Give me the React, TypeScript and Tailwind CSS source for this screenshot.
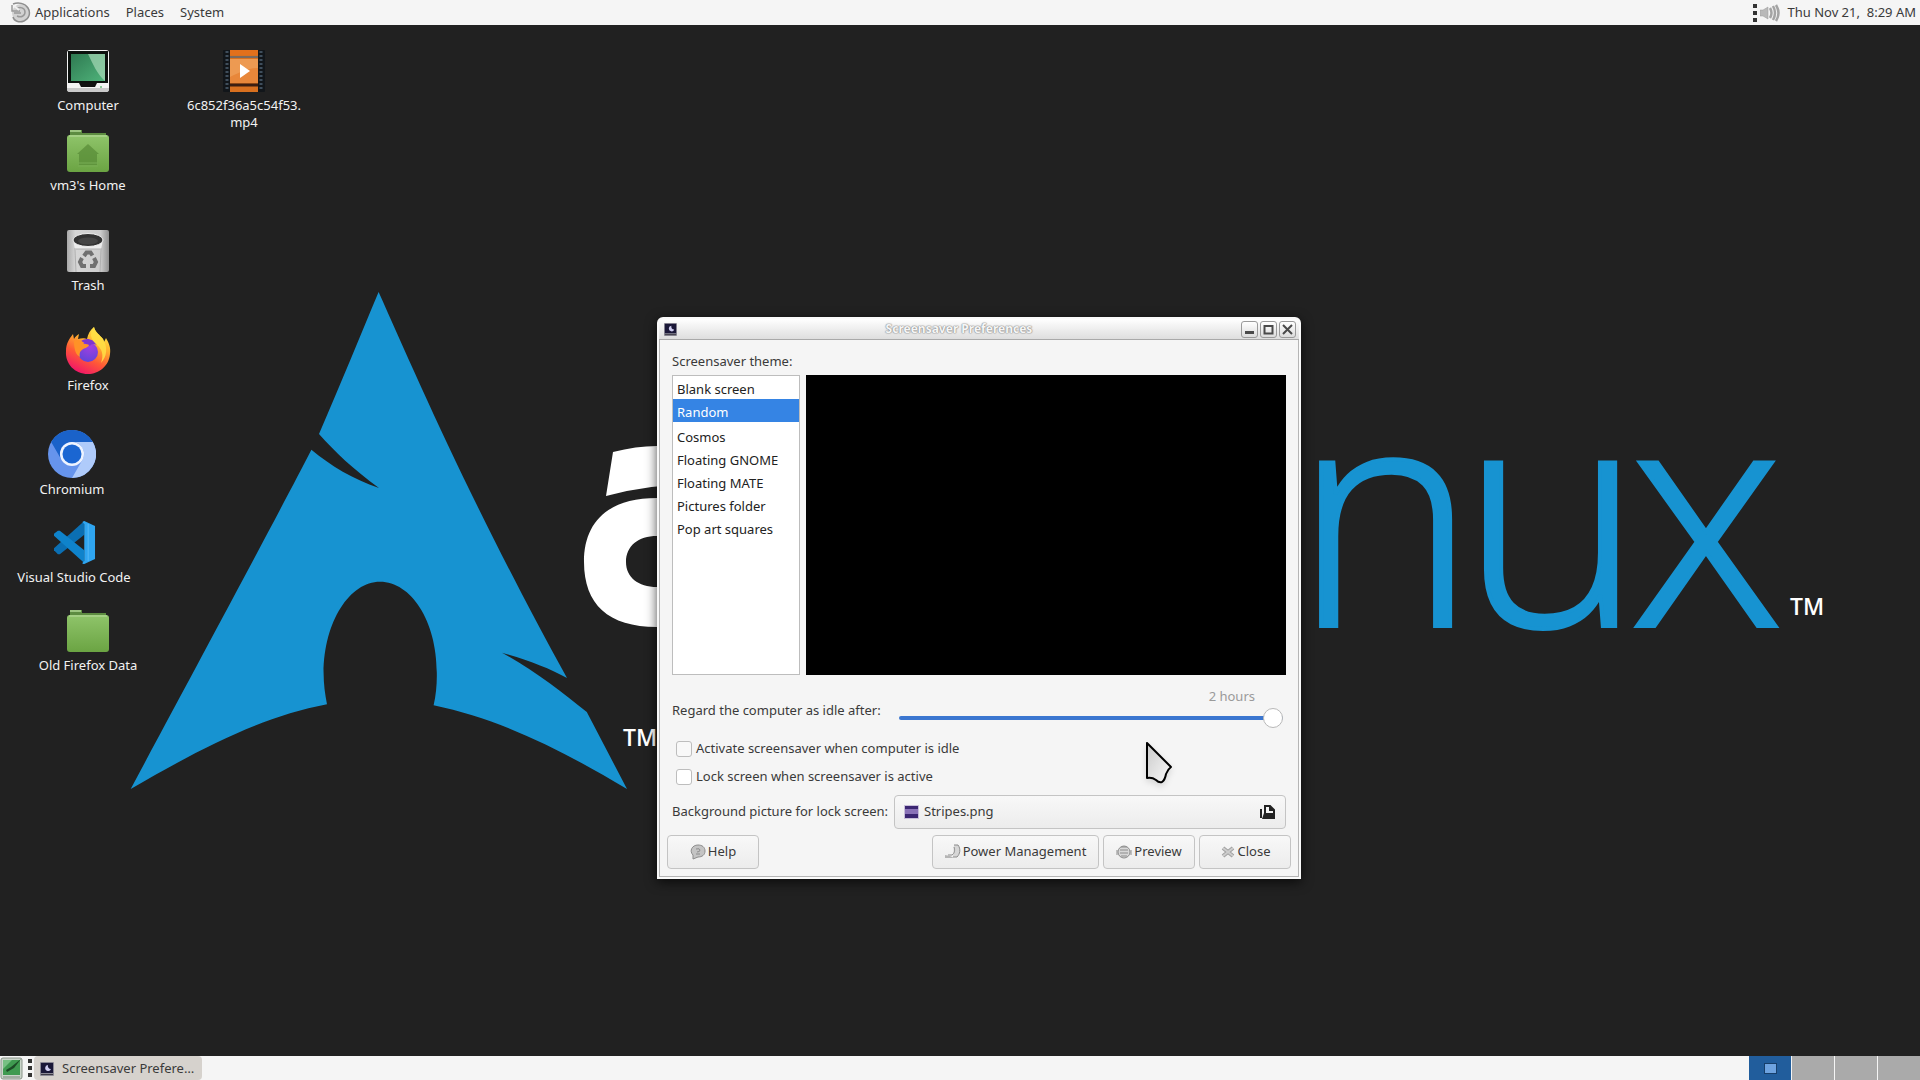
import React, { useState } from "react";

const THEMES = ["Cosmos", "Floating GNOME", "Floating MATE", "Pictures folder", "Pop art squares"];

function Wallpaper() {
  return (
    <svg
      className="absolute inset-0 h-full w-full"
      viewBox="0 0 1920 1080"
      preserveAspectRatio="xMidYMid slice"
      aria-hidden="true"
    >
      <path
        fill="#1793d1"
        d="M378.600 292 C361 334 341 383 319 434 C335 452 353 469 379 488 C353 479 331 466 311.400 449.700 C280 511 204 652 130.700 789 C200 749 260 717 327 704.300 C325 694 323.600 684 323.600 673 C324 621 350 581.700 380 581.700 C411 581.700 437 621 436.800 673 C437 684 436 695 433.600 705.300 C500 719 560 749 627 789 L586.800 712 C562 692 534 670 502 652.700 C528 660 549 668 567 678 C470 502 415 373 378.600 292 Z"
      />
      <g fill="#ffffff">
        <path d="M613 452 Q636 446 657 446 H700 V484 Q650 484 606 496 Z" />
        <path d="M657 498 C608 498 584 522 584 562 C584 604 608 627 657 627 H700 V587 H657 C638 587 626 577 626 562 C626 546 638 536 657 536 H700 V498 Z" />
      </g>
      <g className="font-['Open_Sans',sans-serif]">
        <g fontSize="308" fontWeight="300" fill="#1793d1" stroke="#1793d1" strokeWidth="4">
          <text x="1294" y="626">n</text>
          <text x="1461" y="626">u</text>
          <text x="1630" y="626">x</text>
        </g>
        <g fontSize="23" fontWeight="600" fill="#ffffff">
          <text x="623" y="746">TM</text>
          <text x="1790" y="615">TM</text>
        </g>
      </g>
    </svg>
  );
}

function ComputerIcon() {
  return (
    <svg className="h-[42px] w-[42px]" viewBox="0 0 42 42">
      <defs>
        <linearGradient id="screen" x1="0" y1="0" x2="1" y2="1">
          <stop offset="0" stopColor="#2f7a52" />
          <stop offset="1" stopColor="#4fb37a" />
        </linearGradient>
      </defs>
      <rect x="0" y="0" width="42" height="42" rx="3" fill="#f4f4f4" />
      <path d="M1 1h40v32H1z" fill="#0c110e" />
      <rect x="4" y="4" width="34" height="27" fill="url(#screen)" />
      <path d="M21 4h17v27C30 24 26 14 21 4z" fill="#a7d8b6" opacity=".7" />
      <path d="M12 33h18l-2 4H14z" fill="#111" />
      <path d="M0 38h42v1a3 3 0 0 1-3 3H3a3 3 0 0 1-3-3z" fill="#c9c9c9" />
      <circle cx="34" cy="37" r="1" fill="#6abf7b" />
    </svg>
  );
}

function FolderIcon({ home = false }: { home?: boolean }) {
  return (
    <svg className="h-[42px] w-[42px]" viewBox="0 0 42 42">
      <defs>
        <linearGradient id="folder" x1="0" y1="0" x2="0" y2="1">
          <stop offset="0" stopColor="#8fc46a" />
          <stop offset="1" stopColor="#6ba443" />
        </linearGradient>
      </defs>
      <path d="M3 0h12v3h24v10H3z" fill="#5d8c41" />
      <path d="M3 0h11v2H3z" fill="#9cc580" />
      <rect x="0" y="5" width="42" height="37" rx="3" fill="url(#folder)" />
      <path d="M2 6h38" stroke="#b9dc9f" strokeWidth="1" />
      {home && <path d="M21 14l11 10h-2v11H12V24h-2z" fill="#578a36" opacity=".7" />}
      {home && <path d="M11 36h20M11 33h20" stroke="#79ad54" strokeWidth="1" />}
    </svg>
  );
}

function TrashIcon() {
  return (
    <svg className="h-[42px] w-[42px]" viewBox="0 0 42 42">
      <defs>
        <linearGradient id="bin" x1="0" y1="0" x2="1" y2="0">
          <stop offset="0" stopColor="#a9a9a9" />
          <stop offset=".2" stopColor="#d6d6d6" />
          <stop offset=".8" stopColor="#cccccc" />
          <stop offset="1" stopColor="#8f8f8f" />
        </linearGradient>
      </defs>
      <rect width="42" height="42" rx="2" fill="url(#bin)" />
      <path d="M6 10l2 9h26l2-9z" fill="#ededed" />
      <ellipse cx="21" cy="10" rx="15" ry="6.500" fill="#333" stroke="#efefef" />
      <ellipse cx="21" cy="11" rx="10" ry="3.500" fill="#454545" />
      <path d="M7 19h28M8 20l1 22M34 20l-1 22" stroke="#b0b0b0" fill="none" />
      <g stroke="#707070" strokeWidth="4" fill="none">
        <path d="M17 26l2.500-3.500h4l2 3" />
        <path d="M27 28l2 4-2 4h-4" />
        <path d="M19 36h-4l-2-4 2-4" />
      </g>
    </svg>
  );
}

function FirefoxIcon() {
  return (
    <svg className="h-[48px] w-[46px]" viewBox="0 0 46 48">
      <defs>
        <linearGradient id="ffFlame" x1=".8" y1="0" x2=".3" y2="1">
          <stop offset="0" stopColor="#fff44f" />
          <stop offset=".35" stopColor="#ffb02e" />
          <stop offset=".65" stopColor="#ff5a36" />
          <stop offset="1" stopColor="#f0136b" />
        </linearGradient>
        <radialGradient id="ffGlobe" cx=".6" cy=".2" r=".9">
          <stop offset="0" stopColor="#a43fe0" />
          <stop offset="1" stopColor="#5b45d8" />
        </radialGradient>
      </defs>
      <path
        d="M29 1c1 5 6 8 9 12l1 3 2-4c3 5 5 10 4 16-1 12-11 20-22 20C10 48 0 38 1 25c0-7 3-12 7-17l1 5c1-2 3-4 5-5l-1 5c3-1 7-1 9 0 1-5 3-9 7-12z"
        fill="url(#ffFlame)"
      />
      <circle cx="23" cy="26" r="10" fill="url(#ffGlobe)" />
      <path d="M16 15c5-4 13-2 16 4-4-2-6-1-7 1z" fill="#7d35cf" />
      <path d="M9 15c4-2 8-1 10 3 2 0 4 0 5 1-1 3-5 3-7 5-2 1-3 4-2 7-4-2-6-7-6-16z" fill="#ff9227" />
      <path d="M29 1c1 5 6 8 9 12 5 8 4 18-2 24 3-8 1-14-4-18-3-3-5-5-6-9 0-4 1-7 3-9z" fill="#ffdf45" opacity=".85" />
    </svg>
  );
}

function ChromiumIcon() {
  return (
    <svg className="h-[48px] w-[48px]" viewBox="0 0 48 48">
      <circle cx="24" cy="24" r="24" fill="#6694ec" />
      <path d="M3.200 12A24 24 0 0 1 44.800 12H24A12 12 0 0 0 13.600 30z" fill="#1a62c9" />
      <path d="M44.800 12A24 24 0 0 1 24 48l10.400-18A12 12 0 0 0 24 12z" fill="#afcbfa" />
      <circle cx="24" cy="24" r="12" fill="#eef4ff" />
      <circle cx="24" cy="24" r="9.500" fill="#1a66d2" />
    </svg>
  );
}

function CodeIcon() {
  return (
    <svg className="h-[43px] w-[43px]" viewBox="0 0 44 44">
      <path d="M32 0l-31 28 0 2 4 4 2 0 25-20z" fill="#0b6fb3" />
      <path d="M1 13l0 2 31 28v-13L7 10l-2 0z" fill="#0f83cb" />
      <path d="M32 0l11 5v34l-11 5c-1 0-2 0-2-1l2-2V3l-2-2z" fill="#2fa5f0" />
      <path d="M36 3v38" stroke="#56b9f7" strokeWidth="1" />
    </svg>
  );
}

function VideoIcon() {
  return (
    <svg className="h-[42px] w-[42px]" viewBox="0 0 42 42">
      <rect width="42" height="42" rx="1" fill="#12161a" />
      <rect x="7" width="28" height="42" fill="#d8701f" />
      <rect x="7" y="0" width="28" height="5" fill="#e2701c" />
      <rect x="7" y="9" width="28" height="24" fill="#e8873a" />
      <path d="M7 9h28v9C26 18 17 22 7 27z" fill="#f0a35c" opacity=".7" />
      <path d="M7 7h28" stroke="#7a6a60" strokeWidth="2" />
      <path d="M7 35h28" stroke="#3c1f12" strokeWidth="3" />
      <path d="M4 1v40M38 1v40" stroke="#3f4e5c" strokeWidth="3" strokeDasharray="2 2" />
      <path d="M17 14l10 7-10 7z" fill="#fff" />
    </svg>
  );
}

function MoonIcon({ className }: { className: string }) {
  return (
    <svg className={className} viewBox="0 0 14 14" aria-hidden="true">
      <rect width="14" height="14" rx="1" fill="#8c8a96" />
      <rect x="1" y="1" width="12" height="10" fill="#1b1838" />
      <path d="M8 3a3 3 0 1 0 3 4 3 3 0 0 1-3-4z" fill="#cfcdf0" />
      <path d="M1 12.500h12" stroke="#3c3a44" />
    </svg>
  );
}

interface DesktopItemProps {
  place: string;
  icon: React.ReactNode;
  label: string;
  gap?: string;
}

function DesktopItem({ place, icon, label, gap = "gap-[5px]" }: DesktopItemProps) {
  return (
    <button
      type="button"
      className={`absolute flex w-[130px] flex-col items-center text-center leading-[17px] text-[#f2f2f2] ${gap} ${place}`}
    >
      {icon}
      <span className="w-full whitespace-pre-line">{label}</span>
    </button>
  );
}

function Grip() {
  return (
    <span className="flex flex-col gap-[3px]" aria-hidden="true">
      <i className="h-1 w-1 bg-[#333]" />
      <i className="h-1 w-1 bg-[#333]" />
      <i className="h-1 w-1 bg-[#333]" />
    </span>
  );
}

function TopPanel() {
  return (
    <header className="relative flex h-[25px] shrink-0 items-center bg-[#f5f5f5] pt-px pr-1 pl-[9px] text-[#3a3a3a]">
      <nav className="flex items-center gap-4">
        <button type="button" className="flex items-center gap-1">
          <svg className="h-[22px] w-[22px]" viewBox="0 0 22 22" aria-hidden="true">
            <circle cx="12" cy="11" r="9" fill="#d2d2d2" />
            <path d="M4 2c5-2 12-1 15 4s1 11-4 13-10 0-11-4" stroke="#8e8e8e" strokeWidth="1.500" fill="none" />
            <path d="M7 7c4-3 9-1 9 3s-4 6-8 4M3 3v6h8M5 11h7" stroke="#999" strokeWidth="1.500" fill="none" />
            <path d="M5 4l5 4" stroke="#f0f0f0" strokeWidth="2" />
          </svg>
          Applications
        </button>
        <button type="button">Places</button>
        <button type="button">System</button>
      </nav>
      <div className="ml-auto flex items-center gap-[3px]">
        <Grip />
        <button type="button" aria-label="Volume">
          <svg className="h-5 w-5" viewBox="0 0 20 20">
            <path d="M0 7h3l5-3v12l-5-3H0z" fill="#b9b9b9" stroke="#9a9a9a" strokeWidth=".5" />
            <path d="M10 5q3 5 0 10M13 3q4 7 0 14M16 2q5 8 0 16" stroke="#a3a3a3" strokeWidth="2.500" fill="none" />
          </svg>
        </button>
        <time className="pl-1 whitespace-pre">Thu Nov 21,  8:29 AM</time>
      </div>
    </header>
  );
}

function BottomPanel() {
  return (
    <footer className="relative flex h-6 shrink-0 items-center bg-[#f5f5f5] text-[#3a3a3a]">
      <button type="button" aria-label="Show desktop" className="mr-[5px]">
        <svg className="h-[23px] w-[23px]" viewBox="0 0 23 23">
          <rect x="1" y="1" width="21" height="21" rx="2" fill="#c9d4c9" stroke="#8a948a" />
          <rect x="3" y="3" width="17" height="15" fill="#3f9a50" />
          <path d="M3 3h9L3 12z" fill="#77c083" />
          <path d="M6 13l5-3 10-8-7 9-7 4z" fill="#1c4a26" />
          <path d="M3 20h17" stroke="#7b857b" />
        </svg>
      </button>
      <Grip />
      <button type="button" className="ml-[2px] flex h-6 w-[168px] items-center gap-2 rounded bg-[#d6d2cd] pt-px pl-[6px]">
        <MoonIcon className="h-[14px] w-[14px]" />
        <span>Screensaver Prefere…</span>
      </button>
      <div className="ml-auto flex h-6 gap-px">
        <button type="button" aria-label="Workspace 1" className="flex w-[42px] items-center justify-center bg-[#215d9c]">
          <i className="h-[11px] w-[13px] border border-[#173f6b] bg-[#6ea3e0]" />
        </button>
        <button type="button" aria-label="Workspace 2" className="w-[42px] bg-[#aaaaaa]" />
        <button type="button" aria-label="Workspace 3" className="w-[42px] bg-[#aaaaaa]" />
        <button type="button" aria-label="Workspace 4" className="w-[42px] bg-[#aaaaaa]" />
      </div>
    </footer>
  );
}

function WindowButton({ label, children }: { label: string; children: React.ReactNode }) {
  return (
    <button
      type="button"
      aria-label={label}
      className="flex h-[17px] w-[17px] items-center justify-center rounded-[3px] border border-[#9a9a9a] bg-linear-to-b from-white to-[#dcdcdc]"
    >
      <svg className="h-[11px] w-[11px]" viewBox="0 0 11 11" stroke="#4a4a4a" strokeWidth="2" fill="none">
        {children}
      </svg>
    </button>
  );
}

function ActionButton({ width, icon, label }: { width: string; icon: React.ReactNode; label: string }) {
  return (
    <button
      type="button"
      className={`flex h-[34px] items-center justify-center gap-[2px] rounded-[4px] border border-[#c4c4c4] bg-linear-to-b from-[#f8f8f8] to-[#ececec] ${width}`}
    >
      <svg className="h-4 w-4" viewBox="0 0 16 16" fill="none" stroke="#8c8c8c" aria-hidden="true">
        {icon}
      </svg>
      {label}
    </button>
  );
}

function ThemeRow({ name, current, onPick }: { name: string; current: string; onPick: (n: string) => void }) {
  return (
    <button
      type="button"
      role="option"
      aria-selected={name === current}
      onClick={() => onPick(name)}
      className="block h-[23px] w-full px-1 pt-[2px] text-left leading-5 text-[#222] aria-selected:bg-[#3584e4] aria-selected:text-white"
    >
      {name}
    </button>
  );
}

function PreferencesWindow() {
  const [theme, setTheme] = useState("Random");
  const [idle, setIdle] = useState(120);
  return (
    <section
      aria-label="Screensaver Preferences"
      className="absolute top-[317px] left-[657px] flex w-[644px] flex-col rounded-t-[6px] border-2 border-[#fafafa] bg-[#f5f5f5] text-[#3a3a3a] shadow-[0_3px_12px_rgba(0,0,0,0.7)]"
    >
      <div className="flex h-[21px] items-center gap-[2px] rounded-t border-b border-[#a9a9a9] bg-linear-to-b from-white to-[#dedede] pr-[3px] pl-[5px]">
        <MoonIcon className="h-[13px] w-[13px]" />
        <h1 className="flex-1 text-center text-[12px] leading-5 font-bold text-[#f6f6f6] [text-shadow:0_0_1px_#8a8a8a,0_0_1px_#8a8a8a,0_0_2px_#9a9a9a]">
          Screensaver Preferences
        </h1>
        <WindowButton label="Minimize"><path d="M1 8.500h9" strokeWidth="3" /></WindowButton>
        <WindowButton label="Maximize"><path d="M1.500 1v8.500h8V1M1 2h9" /></WindowButton>
        <WindowButton label="Close window"><path d="M1 1l9 9M10 1l-9 9" /></WindowButton>
      </div>

      <div className="flex flex-col border-x border-b border-[#b5b5b5] px-3 pb-[7px]">
        <h2 className="mt-[11px] leading-5" id="theme-label">Screensaver theme:</h2>
        <div className="mt-1 flex gap-[6px]">
          <div role="listbox" aria-labelledby="theme-label" className="h-[300px] w-32 border border-[#bdbdbd] bg-white">
            <ThemeRow name="Blank screen" current={theme} onPick={setTheme} />
            <ThemeRow name="Random" current={theme} onPick={setTheme} />
            <div className="h-[2px]" />
            {THEMES.map((t) => (
              <ThemeRow key={t} name={t} current={theme} onPick={setTheme} />
            ))}
          </div>
          <div className="h-[300px] flex-1 bg-black" />
        </div>

        <div className="mt-[11px] flex items-center">
          <label htmlFor="idle" className="w-[227px] pt-1 leading-5">Regard the computer as idle after:</label>
          <div className="flex flex-1 flex-col pr-[3px]">
            <output htmlFor="idle" className="self-end pr-7 leading-5 text-[#9a9a9a]">2 hours</output>
            <input
              id="idle"
              type="range"
              min={1}
              max={120}
              value={idle}
              onChange={(e) => setIdle(Number(e.target.value))}
              className="h-6 w-full appearance-none bg-transparent [&::-webkit-slider-runnable-track]:h-1 [&::-webkit-slider-runnable-track]:rounded-full [&::-webkit-slider-runnable-track]:bg-[#3b76d0] [&::-webkit-slider-thumb]:-mt-2 [&::-webkit-slider-thumb]:h-5 [&::-webkit-slider-thumb]:w-5 [&::-webkit-slider-thumb]:appearance-none [&::-webkit-slider-thumb]:rounded-full [&::-webkit-slider-thumb]:border [&::-webkit-slider-thumb]:border-[#b8b8b8] [&::-webkit-slider-thumb]:bg-white"
            />
          </div>
        </div>

        <label className="mt-[5px] flex h-7 items-center gap-1 pl-1">
          <input type="checkbox" className="h-4 w-4 appearance-none rounded-[3px] border border-[#bdbdbd] bg-[#f8f8f8] checked:bg-[#3584e4]" />
          Activate screensaver when computer is idle
        </label>
        <label className="flex h-7 items-center gap-1 pl-1">
          <input type="checkbox" className="h-4 w-4 appearance-none rounded-[3px] border border-[#bdbdbd] bg-white checked:bg-[#3584e4]" />
          Lock screen when screensaver is active
        </label>

        <div className="mt-1 flex items-center">
          <label htmlFor="picture" className="w-[222px]">Background picture for lock screen:</label>
          <button
            id="picture"
            type="button"
            className="flex h-[34px] flex-1 items-center gap-[5px] rounded-[4px] border border-[#c4c4c4] bg-linear-to-b from-[#f8f8f8] to-[#ececec] px-[9px]"
          >
            <svg className="h-[14px] w-[15px]" viewBox="0 0 15 14" aria-hidden="true">
              <rect width="15" height="14" fill="#c9c0da" />
              <rect x="1" y="1" width="13" height="12" fill="#3b2672" />
              <rect x="1" y="4" width="13" height="5" fill="#8a72b8" />
            </svg>
            <span>Stripes.png</span>
            <svg className="ml-auto h-4 w-4" viewBox="0 0 16 16" fill="none" stroke="#222" strokeWidth="2" aria-hidden="true">
              <path d="M5 10V2h5l4 4v4M10 2v4h4" />
              <path d="M1 5v9" />
              <path d="M0 15h15V9H4l-2 6z" fill="#222" stroke="none" />
            </svg>
          </button>
        </div>

        <div className="-mx-[5px] mt-[6px] flex gap-1">
          <ActionButton
            width="w-[92px]"
            label="Help"
            icon={
              <>
                <path d="M8 1c4 0 7 2 7 6s-3 6-7 6l-5 2 0-4C-1 7 2 1 8 1z" fill="#c4c4c4" />
                <path d="M6 5q4-1 4 1t-3 2M6 10h4" />
              </>
            }
          />
          <div className="flex-1" />
          <ActionButton
            width="w-[167px]"
            label="Power Management"
            icon={
              <>
                <path d="M9 1h4c3 4 2 9-1 12H8" fill="#d6d6d6" />
                <path d="M9 3c1 3 1 6-2 8H3" />
                <path d="M0 11l5 1 4 2H0z" fill="#b5b5b5" stroke="none" />
              </>
            }
          />
          <ActionButton
            width="w-[92px]"
            label="Preview"
            icon={
              <>
                <circle cx="8" cy="8" r="6" fill="#d8d8d8" />
                <path d="M5 3h6M4 6h8M4 9h8M5 12h6M1 6v5M15 6v5" />
              </>
            }
          />
          <ActionButton
            width="w-[92px]"
            label="Close"
            icon={
              <>
                <path d="M3 4l10 8M13 4L3 12" strokeWidth="4" stroke="#a0a0a0" />
                <path d="M3 4l10 8M13 4L3 12" strokeWidth="2" stroke="#cdcdcd" />
              </>
            }
          />
        </div>
      </div>
    </section>
  );
}

export default function App() {
  return (
    <main className="relative flex h-screen flex-col overflow-hidden bg-[#212121] font-['Noto_Sans',sans-serif] text-[13px]">
      <Wallpaper />
      <TopPanel />
      <div className="flex-1" />
      <BottomPanel />
      <DesktopItem place="top-[50px] left-[23px]" icon={<ComputerIcon />} label="Computer" />
      <DesktopItem place="top-[130px] left-[23px]" icon={<FolderIcon home />} label="vm3's Home" />
      <DesktopItem place="top-[230px] left-[23px]" icon={<TrashIcon />} label="Trash" />
      <DesktopItem place="top-[326px] left-[23px]" gap="gap-[3px]" icon={<FirefoxIcon />} label="Firefox" />
      <DesktopItem place="top-[430px] left-[7px]" gap="gap-[3px]" icon={<ChromiumIcon />} label="Chromium" />
      <DesktopItem place="top-[521px] left-[9px]" icon={<CodeIcon />} label="Visual Studio Code" />
      <DesktopItem place="top-[610px] left-[23px]" icon={<FolderIcon />} label="Old Firefox Data" />
      <DesktopItem place="top-[50px] left-[179px]" icon={<VideoIcon />} label={"6c852f36a5c54f53.\nmp4"} />
      <PreferencesWindow />
      <svg className="pointer-events-none absolute top-[740px] left-[1144px] h-12 w-8 drop-shadow-md" viewBox="0 0 32 48" aria-hidden="true">
        <defs>
          <linearGradient id="pointer" x1="0" y1="0" x2="1" y2="1">
            <stop offset="0" stopColor="#c9c9c9" />
            <stop offset="1" stopColor="#fafafa" />
          </linearGradient>
        </defs>
        <path
          d="M3 3v35q5-1 9 2 3 3 6 2 3-2 4-8 2-5 5-7z"
          fill="url(#pointer)"
          stroke="#000"
          strokeWidth="2"
          strokeLinejoin="round"
        />
      </svg>
    </main>
  );
}
